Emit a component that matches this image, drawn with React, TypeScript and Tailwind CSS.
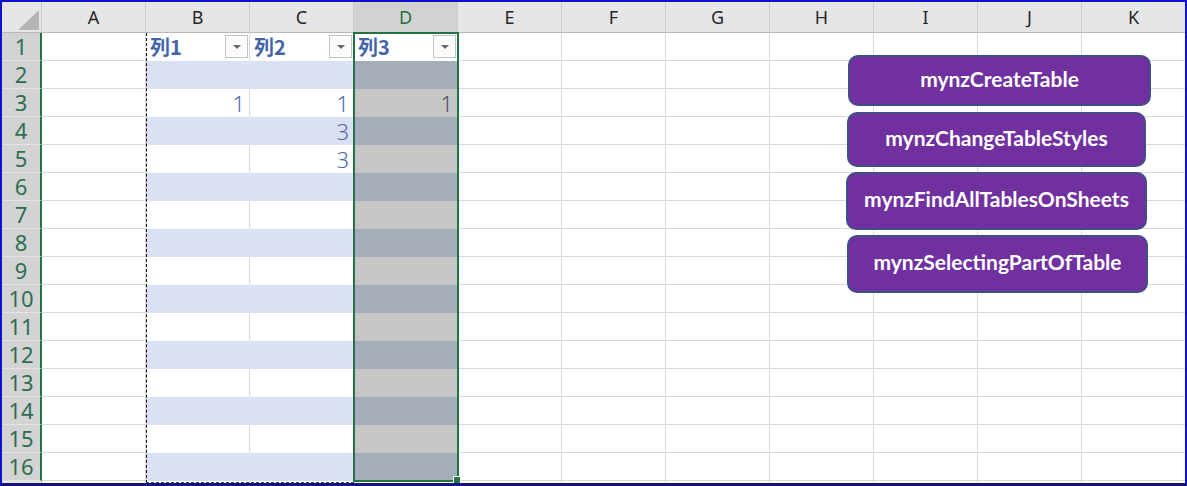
const cols = ["A", "B", "C", "D", "E", "F", "G", "H", "I", "J", "K"];
const rows = Array.from({ length: 17 }, (_, i) => i + 1);

const headers: Record<string, string> = { B: "列1", C: "列2", D: "列3" };
const values: Record<string, string> = { B3: "1", C3: "1", D3: "1", C4: "3", C5: "3" };

// shapes float on the sheet, so they keep their own coordinates
const buttons = [
  { label: "mynzCreateTable", left: 846, top: 53, width: 303, height: 51 },
  { label: "mynzChangeTableStyles", left: 845, top: 110, width: 299, height: 55 },
  { label: "mynzFindAllTablesOnSheets", left: 844, top: 170, width: 301, height: 58 },
  { label: "mynzSelectingPartOfTable", left: 845, top: 233, width: 301, height: 58 },
];

function cellStyle(col: string, row: number) {
  const tableCol = col === "B" || col === "C";
  if (col === "D" && row >= 2 && row <= 16) {
    return row % 2 === 0
      ? "bg-[#a6adba] border-r-[#a6adba] border-b-[#a6adba]"
      : "bg-[#c6c6c6] border-r-[#c6c6c6] border-b-[#c6c6c6]";
  }
  if (col === "D" && row === 1) return "bg-white border-r-white border-b-white";
  if (tableCol && row >= 2 && row <= 16 && row % 2 === 0) {
    return "bg-[#d9e1f2] border-r-[#d9e1f2] border-b-[#d9e1f2]";
  }
  if (tableCol && row <= 16) return "bg-white border-r-[#d9d9d9] border-b-white";
  return "bg-white border-r-[#d9d9d9] border-b-[#d9d9d9]";
}

function FilterButton() {
  return (
    <div className="w-[23px] h-[23px] border border-[#c3c3c3] bg-[#fbfbfb] flex items-center justify-center">
      <svg width="10" height="6" viewBox="0 0 10 6">
        <polygon points="1,1 9,1 5,5" fill="#6b6b6b" />
      </svg>
    </div>
  );
}

function Cell({ col, row }: { col: string; row: number }) {
  const value = values[col + row];
  const header = row === 1 ? headers[col] : undefined;

  if (header) {
    return (
      <div className={`flex items-center justify-between pl-[4px] pr-[1px] border-r border-b ${cellStyle(col, row)}`}>
        <span className="text-[20px] leading-[26px] font-bold text-[#4264ab] font-['Noto_Sans_CJK_JP','Noto_Sans',sans-serif]">
          {header}
        </span>
        <FilterButton />
      </div>
    );
  }

  return (
    <div className={`flex items-center justify-end pr-[4px] border-r border-b ${cellStyle(col, row)}`}>
      {value ? (
        <span
          className={`text-[22px] leading-[28px] font-['Noto_Sans',sans-serif] font-light ${
            col === "D" ? "text-[#4a505c]" : "text-[#5068a8]"
          }`}
        >
          {value}
        </span>
      ) : null}
    </div>
  );
}

export default function App() {
  return (
    <div className="relative w-[1187px] h-[486px] overflow-hidden bg-white border-2 border-[#1010d0] border-b-[3px] border-b-[#14147a]">
      <div className="grid grid-cols-[40px_repeat(11,104px)] grid-rows-[31px_repeat(17,28px)]">
        <div className="bg-[#e6e6e6] border-r border-b border-r-[#c9c9c9] border-b-[#b8b8b8]">
          <svg width="40" height="31" viewBox="0 0 40 31">
            <polygon points="37,8 37,28 16,28" fill="#b5b5b5" />
          </svg>
        </div>
        {cols.map((c) => (
          <div
            key={c}
            className={`flex items-center justify-center border-r border-b border-r-[#cdcdcd] border-b-[#b8b8b8] text-[18px] font-['Noto_Sans',sans-serif] ${
              c === "D" ? "bg-[#d2d2d2] text-[#217346]" : "bg-[#e6e6e6] text-[#262626]"
            }`}
          >
            {c}
          </div>
        ))}
        {rows.map((r) => (
          <div key={r} className="contents">
            <div
              className={`flex items-center justify-center border-b text-[22px] font-['Noto_Sans',sans-serif] ${
                r <= 16
                  ? "bg-[#d3d3d3] text-[#2e6e50] border-r-2 border-r-[#217346] border-b-[#e4e4e4]"
                  : "bg-[#e6e6e6] text-[#262626] border-r border-r-[#c9c9c9] border-b-[#c9c9c9]"
              }`}
            >
              {r <= 16 ? r : null}
            </div>
            {cols.map((c) => (
              <Cell key={c + r} col={c} row={r} />
            ))}
          </div>
        ))}
      </div>

      {/* dashed outline of table columns B:C */}
      <div className="absolute left-[144px] top-[31px] w-[208px] h-[450px] border-l border-b border-dashed border-l-black border-b-[#34447e] pointer-events-none" />

      {/* active selection D1:D16 */}
      <div className="absolute left-[351px] top-[30px] w-[106px] h-[450px] border-2 border-[#217346] pointer-events-none" />
      <div className="absolute left-[451px] top-[474px] w-[8px] h-[8px] bg-[#217346] border border-white" />

      {buttons.map((b) => (
        <div
          key={b.label}
          className="absolute flex items-center justify-center pb-[4px] rounded-[10px] bg-[#7030a0] border-2 border-[#3f4f86] text-white text-[21px] font-bold font-['Lato',sans-serif]"
          style={{ left: b.left, top: b.top, width: b.width, height: b.height }}
        >
          {b.label}
        </div>
      ))}
    </div>
  );
}
